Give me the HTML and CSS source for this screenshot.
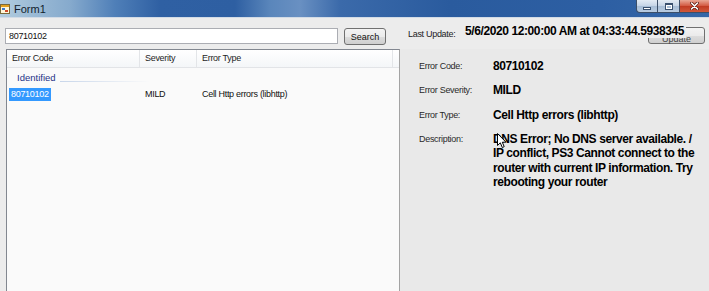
FILE: index.html
```html
<!DOCTYPE html>
<html>
<head>
<meta charset="utf-8">
<title>Form1</title>
<link rel="stylesheet" href="styles.css">
</head>
<body>
<div class="window">
  <div class="titlebar">
    <svg class="title-icon" width="10" height="11" viewBox="0 0 10 11">
      <rect x="0.5" y="1.5" width="9" height="9" fill="#fff6d8" stroke="#7a6a3a"/>
      <rect x="1" y="2" width="8" height="2" fill="#e0a020"/>
      <rect x="2" y="5" width="3" height="2" fill="#3b7bd0"/>
      <rect x="5" y="7" width="3" height="2" fill="#d04a2a"/>
    </svg>
    <span class="title-text">Form1</span>
    <div class="controls">
      <div class="ctl min"><span class="glyph-min"></span></div>
      <div class="ctl max"><span class="glyph-max"></span></div>
      <div class="ctl close">
        <svg width="9" height="8" viewBox="0 0 9 8">
          <path d="M1.5 1 L7.5 7 M7.5 1 L1.5 7" stroke="#5a1a10" stroke-width="3" stroke-linecap="round"/>
          <path d="M1.5 1 L7.5 7 M7.5 1 L1.5 7" stroke="#fff" stroke-width="1.6" stroke-linecap="round"/>
        </svg>
      </div>
    </div>
  </div>
  <div class="form">
    <div class="toprow">
      <div class="textbox">80710102</div>
      <button class="btn search">Search</button>
      <span class="lu-label">Last Update:</span>
      <span class="lu-value">5/6/2020 12:00:00 AM at 04:33:44.5938345</span>
      <button class="btn update">Update</button>
    </div>
    <div class="main">
      <div class="listview">
        <div class="lv-header">
          <div class="hcell">Error Code</div>
          <div class="hcell">Severity</div>
          <div class="hcell">Error Type</div>
          <div class="hcell filler"></div>
        </div>
        <div class="lv-group"><span class="group-text">Identified</span><span class="group-line"></span></div>
        <div class="lv-row">
          <div class="cell first"><span class="selected">80710102</span></div>
          <div class="cell">MILD</div>
          <div class="cell">Cell Http errors (libhttp)</div>
        </div>
      </div>
      <div class="details">
        <div class="d-label">Error Code:</div>
        <div class="d-value">80710102</div>
        <div class="d-label">Error Severity:</div>
        <div class="d-value">MILD</div>
        <div class="d-label">Error Type:</div>
        <div class="d-value">Cell Http errors (libhttp)</div>
        <div class="d-label">Description:</div>
        <div class="d-value">DNS Error; No DNS server available. / IP conflict, PS3 Cannot connect to the router with current IP information. Try rebooting your router</div>
        <svg class="cursor" width="10" height="16" viewBox="0 0 10 16">
          <path d="M0.5 0.5 L0.5 12.5 L3.3 9.8 L5.3 14.5 L7.2 13.7 L5.3 9.2 L9 9.2 Z" fill="#fff" stroke="#000" stroke-width="1"/>
        </svg>
      </div>
    </div>
  </div>
</div>
</body>
</html>
```
FILE: styles.css
```css
* {
  box-sizing: border-box;
  margin: 0;
  padding: 0;
}

body {
  width: 709px;
  height: 291px;
  overflow: hidden;
  font-family: "Liberation Sans", Arial, sans-serif;
  background: #ececec;
}

.window {
  display: flex;
  flex-direction: column;
  height: 291px;
}

.titlebar {
  height: 17px;
  flex: none;
  display: flex;
  align-items: center;
  background: linear-gradient(90deg, #b3cde0 0, #9dbcd6 30px, #86aacd 70px, #4f7fb8 115px, #2f60a3 160px, #2e5fa2 235px, #5a86bb 270px, #6990c2 300px, #3b6aaa 340px, #2a5b9e 450px, #2d5fa3 600px, #3567a8 709px);
}

.title-icon {
  flex: none;
  margin: 0 4px 0 0;
}

.title-text {
  font-size: 11px;
  color: #111c2c;
}

.controls {
  margin-left: auto;
  align-self: flex-start;
  display: flex;
}

.ctl {
  height: 13px;
  width: 22px;
  border: 1px solid #3c4f68;
  border-top: none;
  border-left: none;
  background: linear-gradient(#e3ebf4, #c5d4e6 50%, #a7bdd6 51%, #b9cce1);
  display: flex;
  align-items: center;
  justify-content: center;
}

.ctl.min {
  border-left: 1px solid #3c4f68;
  border-radius: 0 0 0 4px;
}

.ctl.close {
  width: 29px;
  border-right: none;
  background: linear-gradient(#e9a795, #d2573f 50%, #c03a22 51%, #d0583a);
}

.glyph-min {
  width: 8px;
  height: 3px;
  background: #fff;
  border: 1px solid #39506e;
  margin-top: 4px;
}

.glyph-max {
  width: 8px;
  height: 7px;
  border: 1px solid #39506e;
  box-shadow: inset 0 0 0 1px #fff;
  border-top-width: 2px;
}

.form {
  flex: 1;
  display: flex;
  flex-direction: column;
  min-height: 0;
  border-top: 1px solid #d2dbe6;
}

.toprow {
  height: 31px;
  flex: none;
  display: flex;
  align-items: flex-start;
  padding: 10px 0 0 5px;
  position: relative;
}

.textbox {
  width: 333px;
  height: 16px;
  border: 1px solid #abadb3;
  background: #fff;
  font-size: 9px;
  letter-spacing: -0.3px;
  line-height: 14px;
  padding-left: 3px;
  color: #111;
}

.btn {
  font-family: "Liberation Sans", Arial, sans-serif;
  font-size: 9px;
  color: #111;
  border: 1px solid #707070;
  border-radius: 3px;
  background: linear-gradient(#f3f3f3 0, #ebebeb 50%, #dddddd 51%, #cfcfcf 100%);
}

.search {
  margin-left: 6px;
  width: 42px;
  height: 17px;
}

.lu-label {
  margin-left: 22px;
  width: 57px;
  font-size: 9px;
  letter-spacing: -0.3px;
  color: #222;
  line-height: 12px;
}

.lu-value {
  position: relative;
  z-index: 1;
  margin-top: -3px;
  font-weight: bold;
  font-size: 12px;
  letter-spacing: -0.4px;
  line-height: 13px;
  color: #000;
  background: #ececec;
  padding-right: 2px;
}

.update {
  position: absolute;
  left: 648px;
  top: 9px;
  width: 57px;
  height: 17px;
  padding-top: 6px;
  color: #444;
}

.main {
  flex: 1;
  min-height: 0;
  display: grid;
  grid-template-columns: 400px 1fr;
}

.listview {
  margin-left: 6px;
  border: 1px solid #828790;
  border-bottom: none;
  border-right-color: #a3a3a3;
  background: #fafafa;
  overflow: hidden;
}

.lv-header {
  display: grid;
  grid-template-columns: 133px 57px 196px 1fr;
  height: 18px;
  background: linear-gradient(#ffffff, #f4f6f8);
  border-bottom: 1px solid #e2e4e7;
}

.hcell {
  font-size: 9px;
  letter-spacing: -0.3px;
  color: #1e1e1e;
  line-height: 17px;
  padding-left: 5px;
  border-right: 1px solid #e3e5e8;
}

.hcell.filler {
  border-right: none;
}

.lv-group {
  height: 19px;
  display: flex;
  align-items: center;
  padding-left: 10px;
}

.group-text {
  font-size: 9.5px;
  color: #1e3287;
  line-height: 19px;
}

.group-line {
  flex: none;
  width: 90px;
  height: 1px;
  margin: 7px 0 0 4px;
  background: linear-gradient(90deg, #c8d6ea, rgba(200, 214, 234, 0));
}

.lv-row {
  display: grid;
  grid-template-columns: 133px 57px 196px;
  height: 14px;
}

.cell {
  font-size: 9px;
  letter-spacing: -0.3px;
  color: #111;
  line-height: 14px;
  padding-left: 5px;
  white-space: nowrap;
}

.cell.first {
  padding-left: 2px;
}

.selected {
  display: inline-block;
  background: #3399ff;
  color: #fff;
  padding: 0 2px;
  line-height: 13px;
}

.details {
  position: relative;
  padding: 10px 0 0 19px;
  display: grid;
  grid-template-columns: 74px 207px;
  grid-auto-rows: min-content;
  row-gap: 9.8px;
  align-items: start;
  background: #e9e9e9;
}

.d-label {
  font-size: 9px;
  letter-spacing: -0.3px;
  color: #2a2a2a;
  line-height: 14.5px;
}

.d-value {
  font-size: 12px;
  font-weight: bold;
  letter-spacing: -0.4px;
  line-height: 14.5px;
  color: #000;
}

.cursor {
  position: absolute;
  left: 97px;
  top: 84px;
}
```
